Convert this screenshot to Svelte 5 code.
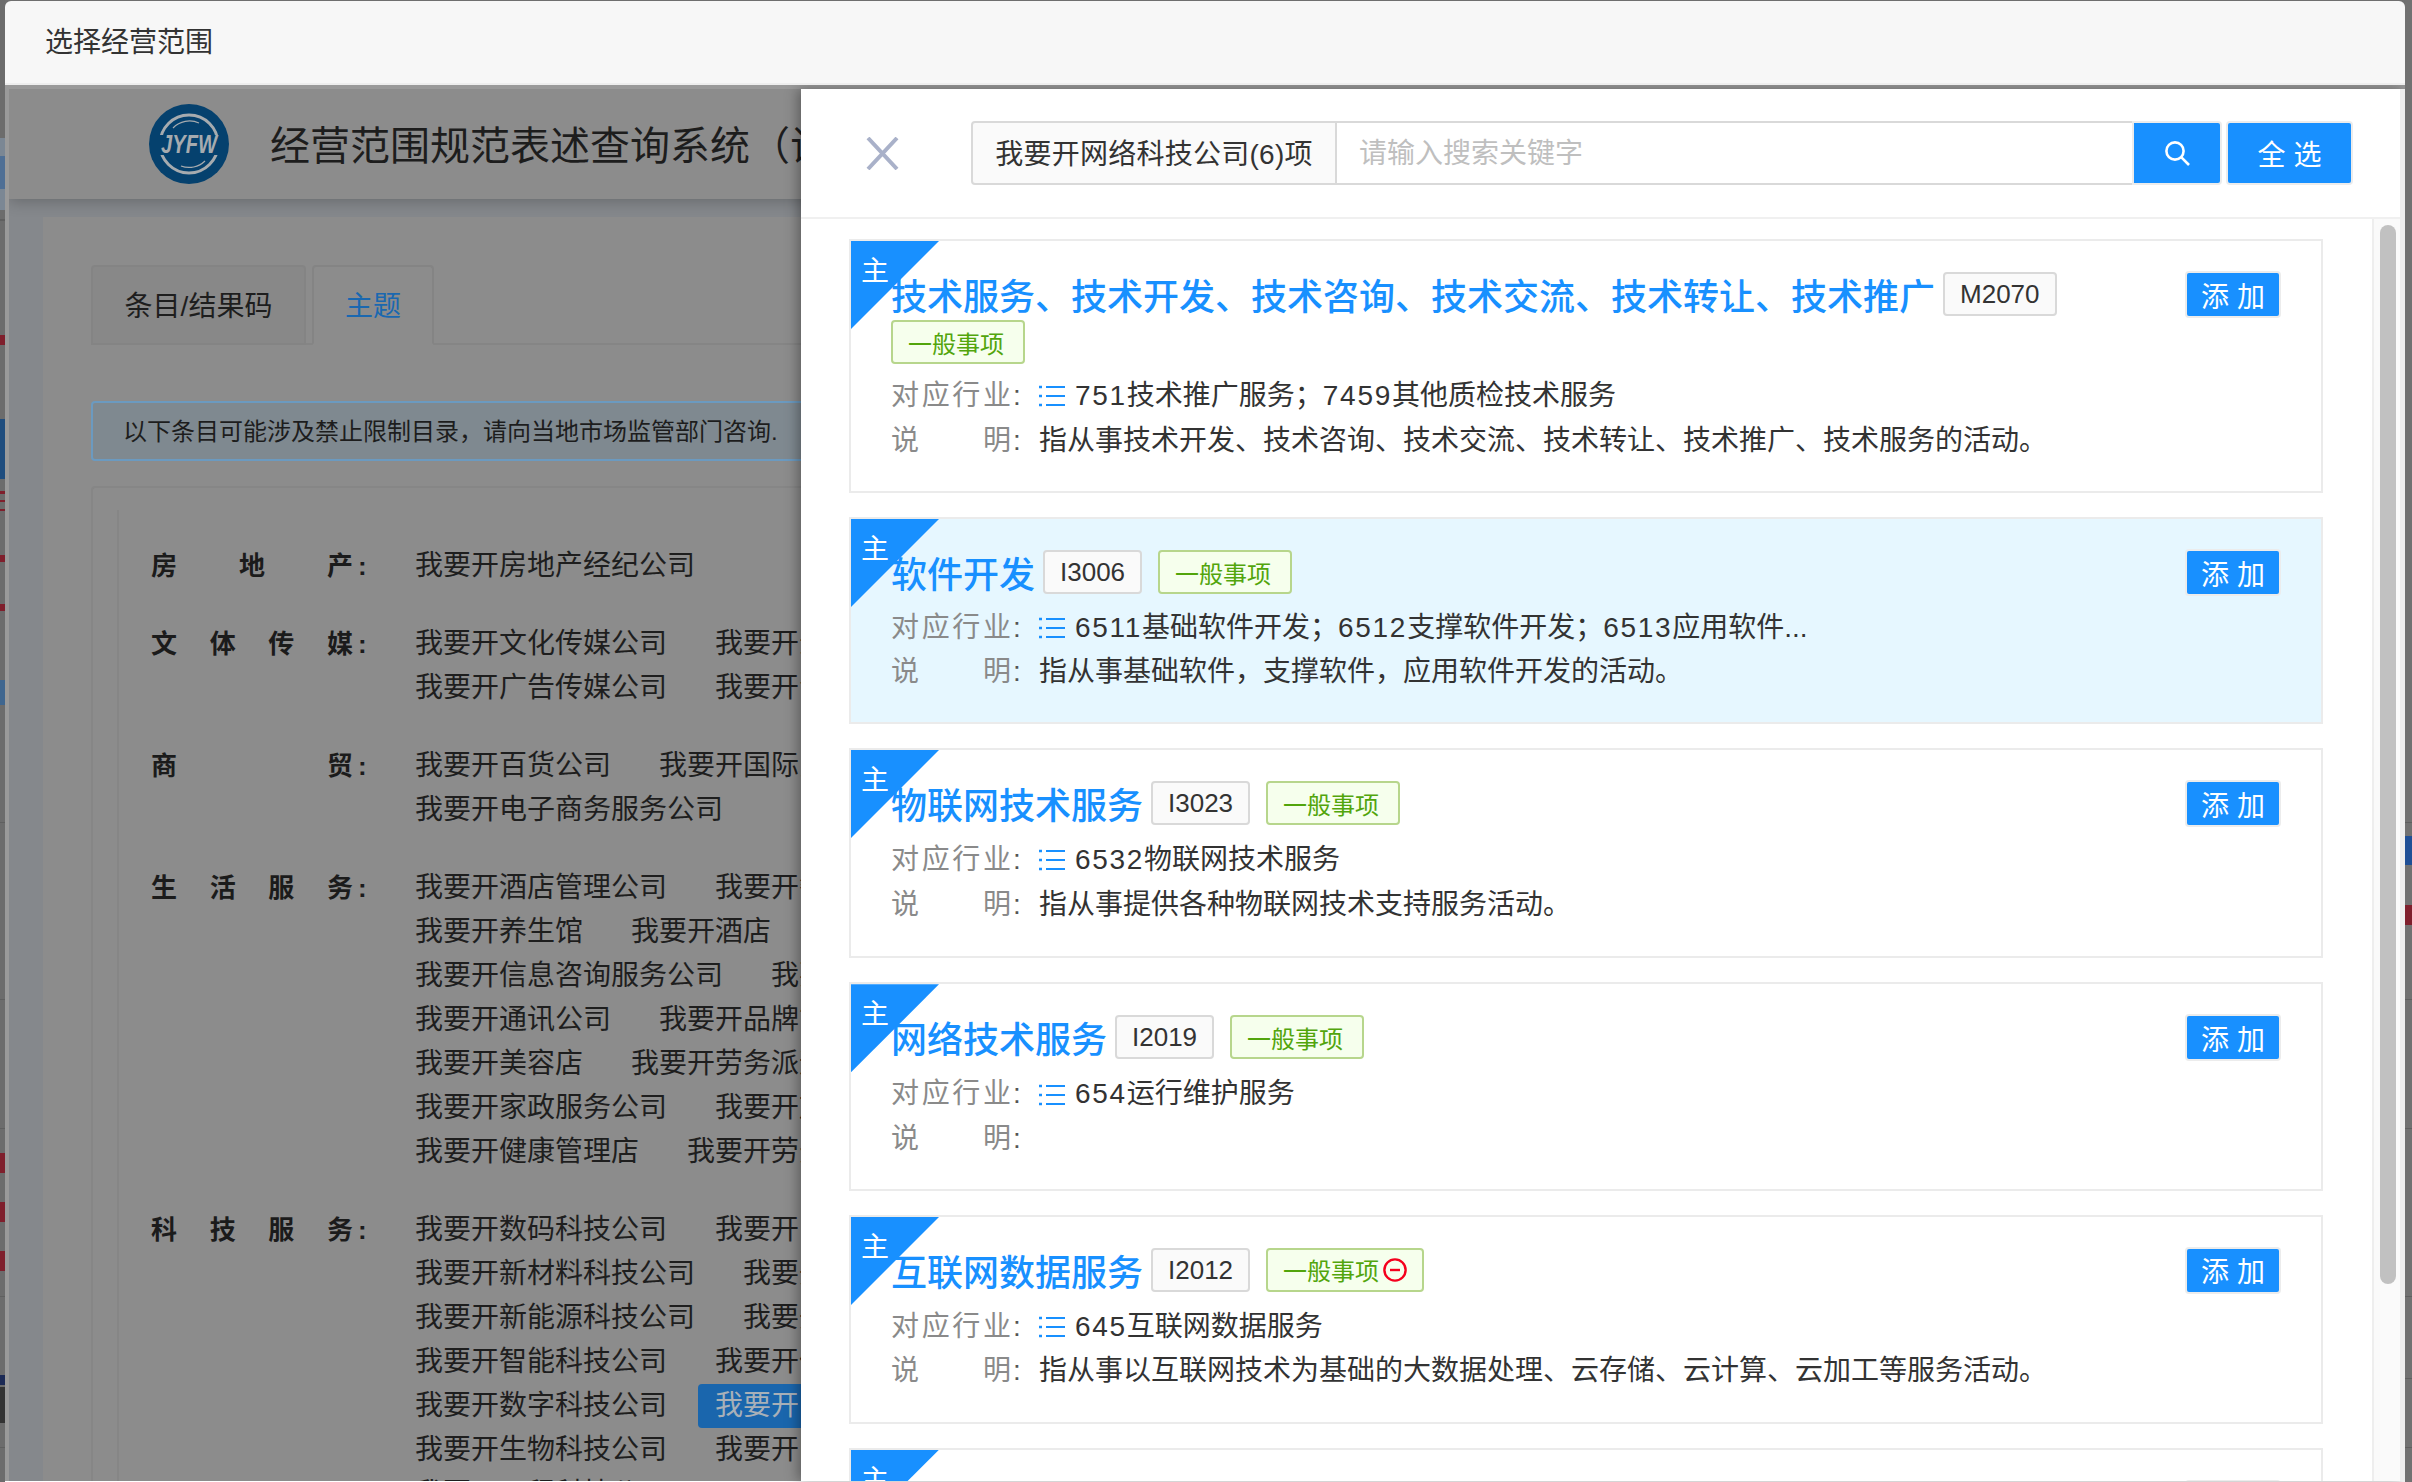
<script>
  const chars = (s) => Array.from(s);
  const parts = (s) => s.split(/(\d+)/).filter(Boolean);
  const groups = [
    { spread: ['房', '地', '产'], lines: [['我要开房地产经纪公司']] },
    { spread: ['文', '体', '传', '媒'], lines: [['我要开文化传媒公司', '我要开影视传媒公司'], ['我要开广告传媒公司', '我要开会展公司']] },
    { spread: ['商', '贸'], lines: [['我要开百货公司', '我要开国际贸易公司'], ['我要开电子商务服务公司']] },
    { spread: ['生', '活', '服', '务'], lines: [
      ['我要开酒店管理公司', '我要开餐饮公司'],
      ['我要开养生馆', '我要开酒店', '我要开民宿'],
      ['我要开信息咨询服务公司', '我要开物流公司'],
      ['我要开通讯公司', '我要开品牌管理公司'],
      ['我要开美容店', '我要开劳务派遣公司'],
      ['我要开家政服务公司', '我要开旅游公司'],
      ['我要开健康管理店', '我要开劳务公司']
    ] },
    { spread: ['科', '技', '服', '务'], lines: [
      ['我要开数码科技公司', '我要开电子科技公司'],
      ['我要开新材料科技公司', '我要开环保公司'],
      ['我要开新能源科技公司', '我要开农业公司'],
      ['我要开智能科技公司', '我要开信息公司'],
      ['我要开数字科技公司', '*我要开网络科技公司'],
      ['我要开生物科技公司', '我要开医疗公司'],
      ['我要开工程科技公司']
    ] }
  ];

  const cards = [
    { kind: 'card-tall', title: '技术服务、技术开发、技术咨询、技术交流、技术转让、技术推广', code: 'M2070', trade: '751技术推广服务；7459其他质检技术服务', desc: '指从事技术开发、技术咨询、技术交流、技术转让、技术推广、技术服务的活动。' },
    { kind: 'card-on', title: '软件开发', code: 'I3006', trade: '6511基础软件开发；6512支撑软件开发；6513应用软件...', desc: '指从事基础软件，支撑软件，应用软件开发的活动。' },
    { kind: 'card-wide', title: '物联网技术服务', code: 'I3023', trade: '6532物联网技术服务', desc: '指从事提供各种物联网技术支持服务活动。' },
    { kind: '', title: '网络技术服务', code: 'I2019', trade: '654运行维护服务', desc: '' },
    { kind: '', title: '互联网数据服务', code: 'I2012', trade: '645互联网数据服务', desc: '指从事以互联网技术为基础的大数据处理、云存储、云计算、云加工等服务活动。', minus: true },
    { kind: '', title: '网络与信息安全软件开发', code: 'I3014', trade: '', desc: '' }
  ];

  const red = '#7f1f2c';
  const line = '#5f5f5f';
  const leftBits = [
    { t: 138, h: 72, c: '#7b8794' }, { t: 156, h: 33, c: '#4f6f95' }, { t: 219, h: 2, c: line },
    { t: 335, h: 10, c: red }, { t: 419, h: 60, c: '#1f4d7e' }, { t: 491, h: 3, c: red },
    { t: 500, h: 2, c: red }, { t: 509, h: 2, c: red }, { t: 555, h: 7, c: red },
    { t: 604, h: 7, c: red }, { t: 680, h: 25, c: '#3f668f' }, { t: 822, h: 1, c: line },
    { t: 999, h: 1, c: line }, { t: 1128, h: 1, c: line }, { t: 1153, h: 20, c: red },
    { t: 1202, h: 20, c: red }, { t: 1251, h: 20, c: red }, { t: 1296, h: 1, c: line },
    { t: 1375, h: 10, c: '#1c2a55' }, { t: 1387, h: 36, c: '#333' }, { t: 1447, h: 1, c: line }
  ];
  const rightBits = [
    { t: 822, h: 1, c: line }, { t: 836, h: 29, c: '#1f4f96' }, { t: 905, h: 20, c: red },
    { t: 999, h: 1, c: line }, { t: 1128, h: 1, c: line }, { t: 1296, h: 1, c: line },
    { t: 1378, h: 1, c: line }, { t: 1447, h: 1, c: line }
  ];
</script>

{#snippet spreadLabel(text)}
  <span class="spread">
    {#each chars(text) as ch}<span>{ch}</span>{/each}
  </span>
{/snippet}

<div class="screen">
  <div class="strip strip-left">
    {#each leftBits as b}<i class="bit" style="top:{b.t}px;height:{b.h}px;background:{b.c}"></i>{/each}
  </div>

  <div class="modal">
    <div class="modal-head">选择经营范围</div>

    <div class="modal-body">
      <div class="page">
        <header class="page-head">
          <svg class="logo" viewBox="0 0 80 80" width="80" height="80" aria-hidden="true">
            <circle cx="40" cy="40" r="40" fill="#05416e" />
            <circle cx="40" cy="40" r="29" fill="none" stroke="#a6abaf" stroke-width="3" />
            <path d="M24 24A23 23 0 0 1 50 19M56 57A23 23 0 0 1 32 62" fill="none" stroke="#a6abaf" stroke-width="1.2" />
            <rect x="8" y="31" width="66" height="20" fill="#05416e" />
            <text x="40" y="49" text-anchor="middle" class="logo-text" textLength="56" lengthAdjust="spacingAndGlyphs">JYFW</text>
          </svg>
          <h1>经营范围规范表述查询系统（试行）</h1>
        </header>

        <main class="panel">
          <nav class="tabs">
            <div class="tab">条目/结果码</div>
            <div class="tab tab-on">主题</div>
          </nav>
          <div class="alert">以下条目可能涉及禁止限制目录，请向当地市场监管部门咨询.</div>
          <div class="outer">
            <div class="inner">
              {#each groups as g}
                <div class="group">
                  <div class="g-label">
                    <span class="g-spread">{#each g.spread as ch}<span>{ch}</span>{/each}</span>
                    <span class="g-colon">:</span>
                  </div>
                  <div class="g-lines">
                    {#each g.lines as row}
                      <div class="g-line">
                        {#each row as item}
                          <span class="item" class:item-on={item.startsWith('*')}>{item.replace('*', '')}</span>
                        {/each}
                      </div>
                    {/each}
                  </div>
                </div>
              {/each}
            </div>
          </div>
        </main>
      </div>

      <aside class="drawer">
        <div class="drawer-head">
          <svg class="close" viewBox="0 0 33 33" width="33" height="33" aria-hidden="true">
            <path d="M2 1L31 32M31 1L2 32" fill="none" stroke="#a9b1c9" stroke-width="4" />
          </svg>
          <div class="search">
            <div class="addon">我要开网络科技公司(6)项</div>
            <input class="input" placeholder="请输入搜索关键字" />
            <button class="btn btn-search" aria-label="搜索">
              <svg viewBox="0 0 26 26" width="26" height="26" aria-hidden="true">
                <circle cx="11" cy="11" r="8.6" fill="none" stroke="#fff" stroke-width="2.6" />
                <path d="M17.2 17.2L25 25" fill="none" stroke="#fff" stroke-width="2.6" />
              </svg>
            </button>
            <button class="btn btn-all">全 选</button>
          </div>
        </div>

        <div class="drawer-body">
          <div class="list">
            {#each cards as c}
              <article class="card {c.kind}">
                <div class="corner"></div>
                <span class="corner-text">主</span>
                <div class="card-main">
                  <div class="title-row">
                    <h2>{c.title}</h2>
                    <span class="code">{c.code}</span>
                    <span class="tag" class:tag-minus={c.minus}>一般事项{#if c.minus}
                      <svg class="minus" viewBox="0 0 24 24" width="24" height="24" aria-hidden="true">
                        <circle cx="12" cy="12" r="10.6" fill="none" stroke="#f5001d" stroke-width="2.4" />
                        <path d="M7 12H17" stroke="#f5001d" stroke-width="2.4" />
                      </svg>{/if}</span>
                  </div>
                  <div class="info">
                    <div class="info-row">
                      {@render spreadLabel('对应行业')}<span class="colon">:</span>
                      <span class="value">
                        <svg class="list-ico" viewBox="0 0 26 22" width="26" height="22" aria-hidden="true">
                          <path d="M7 2H26M7 11H26M7 20H26" stroke="#1890ff" stroke-width="2.2" />
                          <path d="M0 2H3M0 11H3M0 20H3" stroke="#1890ff" stroke-width="2.6" />
                        </svg>
                        <span>{#each parts(c.trade) as p}<span class:digits={/^\d/.test(p)}>{p}</span>{/each}</span>
                      </span>
                    </div>
                    <div class="info-row">
                      {@render spreadLabel('说明')}<span class="colon">:</span>
                      <span class="value">{c.desc}</span>
                    </div>
                  </div>
                </div>
                <button class="btn btn-add">添 加</button>
              </article>
            {/each}
          </div>
          <div class="track"><div class="thumb"></div></div>
        </div>
      </aside>
    </div>
  </div>

  <div class="strip strip-right">
    {#each rightBits as b}<i class="bit" style="top:{b.t}px;height:{b.h}px;background:{b.c}"></i>{/each}
  </div>
</div>

<style>
  :global(body) {
    margin: 0;
    background: #6f6f6f;
  }
  .screen {
    display: flex;
    width: 2412px;
    height: 1482px;
    overflow: hidden;
    background: #6f6f6f;
    font-family: "Liberation Sans", "Noto Sans CJK SC", sans-serif;
    color: #333;
  }
  .strip {
    position: relative;
    flex: none;
    height: 100%;
    overflow: hidden;
  }
  .strip-left { width: 5px; background: #6c6c6c; }
  .strip-right { width: 7px; background: #717171; }
  .bit {
    position: absolute;
    left: 0;
    right: 0;
  }
  .modal {
    flex: 1;
    min-width: 0;
    display: flex;
    flex-direction: column;
    padding-top: 1px;
  }
  .modal-head {
    flex: none;
    height: 82px;
    line-height: 84px;
    padding-left: 40px;
    background: #f7f7f7;
    border-bottom: 2px solid #eeeeee;
    border-radius: 6px 6px 0 0;
    font-size: 28px;
    color: #333;
  }
  .modal-body {
    position: relative;
    flex: 1;
    min-height: 0;
    overflow: hidden;
    background: #9a9a9a;
    padding: 4px 0 1px 4px;
  }
  .modal-body::after {
    content: "";
    position: absolute;
    left: 0;
    right: 0;
    bottom: 0;
    height: 1px;
    background: #fff;
  }
  .page {
    height: 100%;
    overflow: hidden;
    background: #85888c;
  }
  .page-head {
    position: relative;
    z-index: 1;
    display: flex;
    align-items: center;
    height: 110px;
    padding-left: 140px;
    background: #8c8c8c;
    box-shadow: 0 3px 14px rgba(0, 0, 0, 0.22);
  }
  .logo-text {
    font: italic bold 25px "Liberation Sans", sans-serif;
    fill: #a6abaf;
  }
  h1 {
    margin: 3px 0 0 41px;
    font-size: 40px;
    font-weight: 400;
    line-height: 60px;
    color: #1d1d1d;
    white-space: nowrap;
  }
  .panel {
    margin: 18px 0 0 34px;
    padding: 48px 0 0 48px;
    height: 100%;
    background: #8c8c8c;
  }
  .tabs {
    display: flex;
    gap: 6px;
    height: 80px;
    border-bottom: 2px solid #858585;
    box-sizing: border-box;
  }
  .tab {
    width: 215px;
    height: 80px;
    box-sizing: border-box;
    line-height: 80px;
    text-align: center;
    font-size: 28px;
    color: #1e1e1e;
    background: #888888;
    border: 2px solid #848484;
    border-radius: 4px 4px 0 0;
  }
  .tab-on {
    width: 122px;
    color: #1a68b0;
    background: #8c8c8c;
    border-bottom-color: #8c8c8c;
  }
  .alert {
    margin-top: 56px;
    height: 60px;
    box-sizing: border-box;
    line-height: 58px;
    padding-left: 30px;
    font-size: 24px;
    color: #1d1d1d;
    background: #7f8990;
    border: 2px solid #6b9ac0;
    border-radius: 4px;
    white-space: nowrap;
  }
  .outer {
    margin-top: 25px;
    border-left: 2px solid #868686;
    border-top: 2px solid #868686;
    border-radius: 4px 0 0 0;
    padding: 22px 0 0 24px;
  }
  .inner {
    border-left: 2px solid #868686;
    padding: 33.5px 0 0 32px;
    display: flex;
    flex-direction: column;
    gap: 34px;
  }
  .group {
    display: flex;
  }
  .g-label {
    flex: none;
    width: 264px;
    display: flex;
    line-height: 44px;
    font-size: 26px;
    font-weight: 700;
    color: #1b1b1b;
  }
  .g-spread {
    width: 202px;
    display: flex;
    justify-content: space-between;
  }
  .g-colon {
    margin-left: 5px;
  }
  .g-lines {
    min-width: 0;
  }
  .g-line {
    display: flex;
    margin-left: -17px;
    white-space: nowrap;
  }
  .item {
    padding: 0 17px;
    margin-right: 14px;
    line-height: 44px;
    font-size: 28px;
    color: #1e1e1e;
  }
  .item-on {
    background: #1a66ad;
    color: #a8b0b8;
    border-radius: 4px;
  }
  .drawer {
    position: absolute;
    left: 796px;
    top: 4px;
    right: 0;
    bottom: 1px;
    box-sizing: border-box;
    display: flex;
    flex-direction: column;
    background: #fff;
    border-right: 5px solid #eeeeee;
    box-shadow: -3px 0 12px rgba(0, 0, 0, 0.35);
    z-index: 2;
  }
  .drawer-head {
    flex: none;
    height: 130px;
    box-sizing: border-box;
    border-bottom: 2px solid #f0f0f0;
    display: flex;
    align-items: center;
    padding: 0 47px 0 65px;
  }
  .close {
    flex: none;
    margin-right: 72px;
  }
  .search {
    flex: 1;
    display: flex;
    height: 64px;
  }
  .addon {
    flex: none;
    width: 366px;
    box-sizing: border-box;
    line-height: 63px;
    text-align: center;
    letter-spacing: 0.25px;
    font-size: 28px;
    color: #333;
    background: #fafafa;
    border: 2px solid #d9d9d9;
    border-radius: 4px 0 0 4px;
    white-space: nowrap;
  }
  .input {
    flex: 1;
    min-width: 0;
    box-sizing: border-box;
    border: 2px solid #d9d9d9;
    border-left: 0;
    border-right: 0;
    padding: 2px 22px 0;
    outline: none;
    background: #fff;
    font: 28px "Liberation Sans", "Noto Sans CJK SC", sans-serif;
  }
  .input::placeholder {
    color: #bfbfbf;
    opacity: 1;
  }
  .btn {
    box-sizing: border-box;
    padding: 0;
    background: #1890ff;
    color: #fff;
    border: 2px solid #ececec;
    border-radius: 4px;
    font: 28px "Liberation Sans", "Noto Sans CJK SC", sans-serif;
  }
  .btn-search {
    width: 90px;
    display: flex;
    align-items: center;
    justify-content: center;
    border-radius: 0 4px 4px 0;
  }
  .btn-all {
    width: 127px;
    margin-left: 4px;
  }
  .drawer-body {
    flex: 1;
    min-height: 0;
    display: flex;
  }
  .list {
    flex: 1;
    min-width: 0;
    overflow: hidden;
    padding: 20px 49px 0 48px;
    box-sizing: border-box;
  }
  .card {
    position: relative;
    display: flex;
    align-items: flex-start;
    box-sizing: border-box;
    height: 208.67px;
    margin-bottom: 24px;
    padding: 31px 40px 0 40px;
    background: #fff;
    border: 2px solid #ebebeb;
  }
  .card-tall { height: 254px; }
  .card-on { height: 207px; background: #e6f7ff; }
  .card-wide { height: 210.33px; }
  .corner {
    position: absolute;
    left: 0;
    top: 0;
    width: 88px;
    height: 88px;
    background: #1890ff;
    clip-path: polygon(0 0, 100% 0, 0 100%);
  }
  .corner-text {
    position: absolute;
    left: 10px;
    top: 11px;
    line-height: 40px;
    font-size: 28px;
    color: #fff;
  }
  .card-main {
    position: relative;
    flex: 1;
    min-width: 0;
    padding-right: 18px;
  }
  .title-row {
    display: flex;
    flex-wrap: wrap;
    row-gap: 4px;
    align-items: flex-start;
  }
  h2 {
    margin: 0;
    height: 44px;
    font-size: 36px;
    line-height: 51px;
    font-weight: 500;
    color: #1890ff;
    white-space: nowrap;
  }
  .code {
    margin-left: 8px;
    height: 44px;
    box-sizing: border-box;
    padding: 0 15px;
    line-height: 40px;
    font-size: 26px;
    color: #333;
    background: #fafafa;
    border: 2px solid #d9d9d9;
    border-radius: 4px;
  }
  .tag {
    margin-left: 16px;
    height: 44px;
    box-sizing: border-box;
    display: flex;
    align-items: center;
    padding: 0 19px 0 15px;
    font-size: 24px;
    color: #52a50c;
    background: #f6ffed;
    border: 2px solid #b7d68c;
    border-radius: 4px;
  }
  .tag-minus {
    padding-right: 16px;
  }
  .card-tall .tag {
    margin-left: 0;
  }
  .minus {
    margin-left: 4px;
    margin-right: -1px;
  }
  .info {
    margin-top: 13px;
  }
  .card-tall .info {
    margin-top: 10px;
  }
  .card-on .info {
    margin-top: 11.5px;
  }
  .info-row {
    display: flex;
    height: 44.5px;
    line-height: 44.5px;
    font-size: 28px;
  }
  .spread {
    flex: none;
    width: 120px;
    display: flex;
    justify-content: space-between;
    color: #8a8a8a;
  }
  .colon {
    flex: none;
    width: 26px;
    padding-left: 2px;
    color: #555;
  }
  .value {
    display: flex;
    align-items: center;
    white-space: nowrap;
    color: #333;
  }
  .digits {
    letter-spacing: 1.7px;
  }
  .list-ico {
    flex: none;
    margin-right: 10px;
  }
  .btn-add {
    position: relative;
    flex: none;
    width: 96px;
    height: 47px;
    margin-top: -1px;
  }
  .track {
    flex: none;
    width: 28px;
    box-sizing: border-box;
    border-left: 2px solid #eeeeee;
    background: #fafafa;
    padding: 6px 0 0 6px;
  }
  .thumb {
    width: 16px;
    height: 1059px;
    border-radius: 8px;
    background: #c1c1c1;
  }
</style>
